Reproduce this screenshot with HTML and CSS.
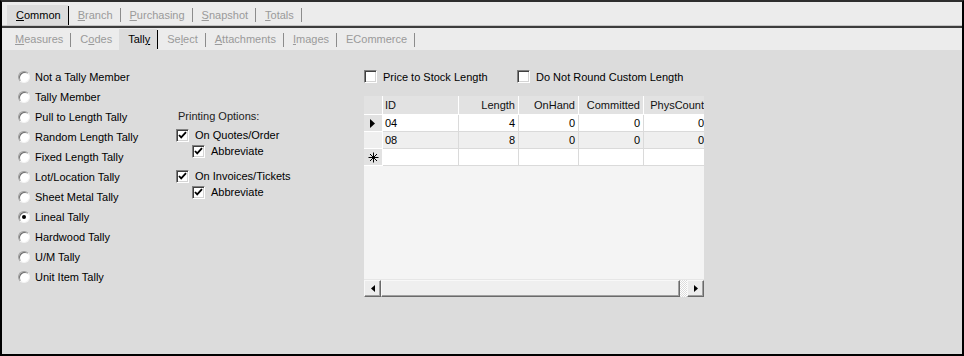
FILE: index.html
```html
<!DOCTYPE html>
<html lang="en">
<head>
  <meta charset="UTF-8" />
  <title>Item - Tally</title>
  <link rel="stylesheet" href="styles.css">
</head>
<body>
  <div class="window">
    <div class="tabs tabs-top">
      <span class="tab active"><u>C</u>ommon</span><span class="sep dark"></span>
      <span class="tab"><u>B</u>ranch</span><span class="sep"></span>
      <span class="tab"><u>P</u>urchasing</span><span class="sep"></span>
      <span class="tab"><u>S</u>napshot</span><span class="sep"></span>
      <span class="tab"><u>T</u>otals</span><span class="sep"></span>
    </div>
    <div class="tabs tabs-sub">
      <span class="tab"><u>M</u>easures</span><span class="sep"></span>
      <span class="tab">C<u>o</u>des</span>
      <span class="tab active">Tall<u>y</u></span><span class="sep dark"></span>
      <span class="tab">Se<u>l</u>ect</span><span class="sep"></span>
      <span class="tab"><u>A</u>ttachments</span><span class="sep"></span>
      <span class="tab"><u>I</u>mages</span><span class="sep"></span>
      <span class="tab">ECommerce</span><span class="sep"></span>
    </div>

    <div class="content">
      <div class="radios">
        <label class="radio-row"><span class="radio"></span>Not a Tally Member</label>
        <label class="radio-row"><span class="radio"></span>Tally Member</label>
        <label class="radio-row"><span class="radio"></span>Pull to Length Tally</label>
        <label class="radio-row"><span class="radio"></span>Random Length Tally</label>
        <label class="radio-row"><span class="radio"></span>Fixed Length Tally</label>
        <label class="radio-row"><span class="radio"></span>Lot/Location Tally</label>
        <label class="radio-row"><span class="radio"></span>Sheet Metal Tally</label>
        <label class="radio-row"><span class="radio checked"></span>Lineal Tally</label>
        <label class="radio-row"><span class="radio"></span>Hardwood Tally</label>
        <label class="radio-row"><span class="radio"></span>U/M Tally</label>
        <label class="radio-row"><span class="radio"></span>Unit Item Tally</label>
      </div>

      <div class="printing">
        <div class="group-label">Printing Options:</div>
        <label class="check-row first"><span class="check on"><svg viewBox="0 0 11 11"><path d="M2 5 L4.2 7.4 L9 2.2"/></svg></span>On Quotes/Order</label>
        <label class="check-row sub"><span class="check on"><svg viewBox="0 0 11 11"><path d="M2 5 L4.2 7.4 L9 2.2"/></svg></span>Abbreviate</label>
        <label class="check-row second"><span class="check on"><svg viewBox="0 0 11 11"><path d="M2 5 L4.2 7.4 L9 2.2"/></svg></span>On Invoices/Tickets</label>
        <label class="check-row sub"><span class="check on"><svg viewBox="0 0 11 11"><path d="M2 5 L4.2 7.4 L9 2.2"/></svg></span>Abbreviate</label>
      </div>

      <div class="stock">
        <div class="stock-opts">
          <label class="check-row opt"><span class="check"></span>Price to Stock Length</label>
          <label class="check-row"><span class="check"></span>Do Not Round Custom Length</label>
        </div>

        <div class="grid">
          <div class="grid-body">
            <table>
              <colgroup>
                <col class="c-rh"><col class="c-id"><col class="c-len"><col class="c-oh"><col class="c-com"><col class="c-phys">
              </colgroup>
              <thead>
                <tr>
                  <th class="rh"></th>
                  <th class="left">ID</th>
                  <th>Length</th>
                  <th>OnHand</th>
                  <th>Committed</th>
                  <th>PhysCount</th>
                </tr>
              </thead>
              <tbody>
                <tr>
                  <td class="rh"><svg class="pointer" viewBox="0 0 5 9"><path d="M0 0 L5 4.5 L0 9 Z"/></svg></td>
                  <td class="left">04</td><td>4</td><td>0</td><td>0</td><td>0</td>
                </tr>
                <tr class="alt">
                  <td class="rh"></td>
                  <td class="left">08</td><td>8</td><td>0</td><td>0</td><td>0</td>
                </tr>
                <tr>
                  <td class="rh"><svg class="star" viewBox="0 0 11 11"><path d="M5.5 0.5 V10.5 M0.5 5.5 H10.5 M2 2 L9 9 M9 2 L2 9"/></svg></td>
                  <td></td><td></td><td></td><td></td><td></td>
                </tr>
              </tbody>
            </table>
          </div>
          <div class="hscroll">
            <span class="sbtn"><svg viewBox="0 0 4 7"><path d="M4 0 L0 3.5 L4 7 Z"/></svg></span>
            <span class="thumb"></span>
            <span class="track"></span>
            <span class="sbtn"><svg viewBox="0 0 4 7"><path d="M0 0 L4 3.5 L0 7 Z"/></svg></span>
          </div>
        </div>
      </div>
    </div>
  </div>
</body>
</html>
```

FILE: styles.css
```css
* {
  margin: 0;
  padding: 0;
  box-sizing: border-box;
}

body {
  font-family: "Liberation Sans", Arial, sans-serif;
  font-size: 11px;
  color: #000;
  background: #dcdcdc;
}

.window {
  width: 964px;
  height: 356px;
  border: 2px solid #000;
  border-top-color: #2e2e2e;
  background: #dcdcdc;
  display: flex;
  flex-direction: column;
}

/* tab strips */
.tabs {
  display: flex;
  align-items: center;
  background: #ececec;
}

.tabs-top {
  height: 24px;
  padding: 3px 0 0 5px;
  border-bottom: 1px solid #c4c4c4;
}

.tabs-sub {
  height: 24px;
  padding: 1px 0 0 4px;
  border-top: 2px solid #3c3c3c;
}

.tab {
  height: 20px;
  line-height: 20px;
  padding: 0 7px 0 9px;
  color: #9a9a9a;
}

.tabs-sub .tab {
  height: 21px;
  line-height: 21px;
}

.tab.active {
  background: #dcdcdc;
  color: #000;
}

.sep {
  width: 1px;
  height: 14px;
  background: #8c8c8c;
}

.sep.dark {
  height: 19px;
  background: #000;
}

/* main panel */
.content {
  flex: 1;
  display: flex;
  padding: 16px 0 0 16px;
}

.radios {
  width: 158px;
  padding-top: 1px;
}

.radio-row {
  display: flex;
  align-items: center;
  height: 20px;
  gap: 5px;
}

.radio {
  width: 12px;
  height: 12px;
  border-radius: 50%;
  background: #fff;
  border: 1px solid;
  border-color: #a0a0a0 #f4f4f4 #f4f4f4 #a0a0a0;
  box-shadow: inset 1px 1px 0 #6e6e6e;
  display: flex;
  align-items: center;
  justify-content: center;
}

.radio.checked::after {
  content: '';
  width: 4px;
  height: 4px;
  border-radius: 50%;
  background: #000;
}

.printing {
  width: 188px;
  padding-top: 43px;
}

.group-label {
  height: 14px;
  line-height: 14px;
  padding-left: 2px;
  color: #222;
}

.check-row {
  display: flex;
  align-items: center;
  height: 16px;
  gap: 6px;
}

.check-row.first {
  margin-top: 4px;
}

.check-row.second {
  margin-top: 9px;
}

.check-row.sub {
  padding-left: 16px;
}

.check {
  width: 13px;
  height: 13px;
  flex: none;
  background: #fff;
  border: 1px solid;
  border-color: #808080 #fff #fff #808080;
  box-shadow: inset 1px 1px 0 #404040, inset -1px -1px 0 #d4d4d4;
}

.check svg {
  display: block;
  width: 11px;
  height: 11px;
}

.check svg path {
  fill: none;
  stroke: #000;
  stroke-width: 1.8;
}

/* right side: stock options + grid */
.stock {
  width: 340px;
}

.stock-opts {
  display: flex;
  height: 20px;
  padding-top: 1px;
}

.stock-opts .check-row {
  height: 19px;
}

.stock-opts .opt {
  width: 153px;
}

.grid {
  margin-top: 10px;
  width: 340px;
  height: 201px;
  background: #f4f4f4;
  display: flex;
  flex-direction: column;
}

.grid-body {
  flex: 1;
  overflow: hidden;
}

table {
  table-layout: fixed;
  border-collapse: separate;
  border-spacing: 0;
  width: 344px;
}

.c-rh { width: 19px; }
.c-id { width: 76px; }
.c-len { width: 60px; }
.c-oh { width: 60px; }
.c-com { width: 65px; }
.c-phys { width: 64px; }

th, td {
  text-align: right;
  padding: 0 3px 0 2px;
  white-space: nowrap;
  overflow: hidden;
  font-weight: normal;
}

th {
  height: 19px;
  background: #e2e2e2;
  border-right: 1px solid #fff;
  border-bottom: 1px solid #fff;
  color: #111;
}

td {
  height: 17px;
  background: #fff;
  border-right: 1px solid #dadada;
  border-bottom: 1px solid #dadada;
}

tr.alt td {
  background: #efefef;
}

th.left, td.left {
  text-align: left;
}

td.rh, th.rh {
  background: #e2e2e2;
  border-right: 1px solid #fff;
  border-bottom: 1px solid #fff;
  padding: 0;
  text-align: center;
}

.pointer {
  width: 5px;
  height: 9px;
  display: block;
  margin: 0 auto;
  position: relative;
  left: -1px;
}

.star {
  width: 11px;
  height: 11px;
  display: block;
  margin: 0 auto;
}

.star path {
  stroke: #000;
  stroke-width: 1;
}

/* horizontal scrollbar */
.hscroll {
  height: 18px;
  display: flex;
  border-top: 1px solid #e6e6e6;
}

.sbtn {
  width: 17px;
  height: 17px;
  background: #ececec;
  border: 1px solid;
  border-color: #f8f8f8 #6a6a6a #6a6a6a #f8f8f8;
  box-shadow: inset -1px -1px 0 #a0a0a0;
  display: flex;
  align-items: center;
  justify-content: center;
}

.sbtn svg {
  width: 4px;
  height: 7px;
}

.thumb {
  width: 299px;
  height: 17px;
  background: #efefef;
  border: 1px solid;
  border-color: #f8f8f8 #6a6a6a #6a6a6a #f8f8f8;
  box-shadow: inset -1px -1px 0 #a0a0a0;
}

.track {
  flex: 1;
  height: 17px;
  background: repeating-conic-gradient(#fff 0 25%, #dcdcdc 0 50%) 0 0 / 2px 2px;
}
```
